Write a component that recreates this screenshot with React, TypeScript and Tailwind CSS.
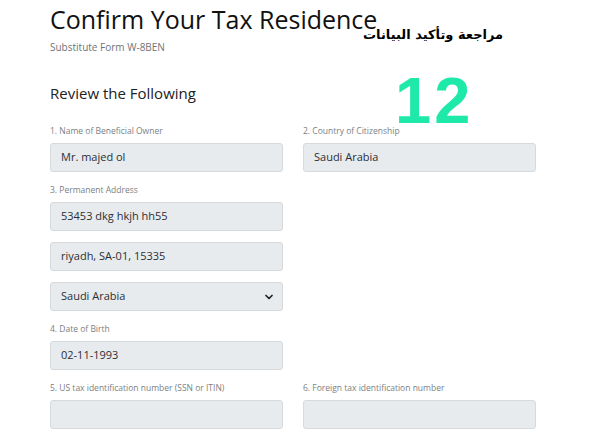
import { ChevronDown } from 'lucide-react'

const inputClass =
  'h-[29px] w-[233px] rounded-[3px] border border-[#d6dadd] bg-[#e8ebee] px-[10px] text-[11px] text-[#2b2f33] flex items-center'

function Field({ label, value }: { label: string; value?: string }) {
  return (
    <div>
      <p className="mb-[7px] text-[8.5px] leading-[10px] text-[#7b7f83]">{label}</p>
      <div className={inputClass}>{value}</div>
    </div>
  )
}

export default function App() {
  return (
    <main
      className="relative h-[443px] w-[595px] overflow-hidden bg-white pl-[50px] pt-[4px]"
      style={{ fontFamily: '"Open Sans", "Liberation Sans", sans-serif' }}
    >
      <h1 className="text-[25px] leading-[30px] text-[#111]">Confirm Your Tax Residence</h1>
      <p className="mt-[7px] text-[10px] leading-[12px] text-[#6f7377]">Substitute Form W-8BEN</p>

      <h2 className="mt-[30px] text-[15px] leading-[20px] text-[#222]">Review the Following</h2>

      <div className="mt-[23px] grid grid-cols-[233px_233px] gap-x-[20px]">
        <div className="flex flex-col">
          <Field label="1. Name of Beneficial Owner" value="Mr. majed ol" />
          <div className="mt-[13px]">
            <Field label="3. Permanent Address" value="53453 dkg hkjh hh55" />
          </div>
          <div className={`${inputClass} mt-[11px]`}>riyadh, SA-01, 15335</div>
          <div className={`${inputClass} mt-[11px] justify-between pr-[7px]`}>
            <span>Saudi Arabia</span>
            <ChevronDown size={12} strokeWidth={3.5} className="text-[#222]" />
          </div>
          <div className="mt-[13px]">
            <Field label="4. Date of Birth" value="02-11-1993" />
          </div>
          <div className="mt-[13px]">
            <Field label="5. US tax identification number (SSN or ITIN)" />
          </div>
        </div>
        <div className="flex flex-col">
          <Field label="2. Country of Citizenship" value="Saudi Arabia" />
          <div className="mt-auto">
            <Field label="6. Foreign tax identification number" />
          </div>
        </div>
      </div>

      <p
        dir="rtl"
        className="absolute left-[363px] top-[26px] text-[13px] font-bold leading-[18px] text-black"
        style={{ fontFamily: '"DejaVu Sans", sans-serif' }}
      >
        مراجعة وتأكيد البيانات
      </p>
      <p
        className="absolute left-[395px] top-[64px] text-[65px] font-bold leading-[74px] tracking-[3px] text-[#1ee9a9]"
        style={{ fontFamily: '"Liberation Sans", Arial, sans-serif' }}
      >
        12
      </p>
    </main>
  )
}
